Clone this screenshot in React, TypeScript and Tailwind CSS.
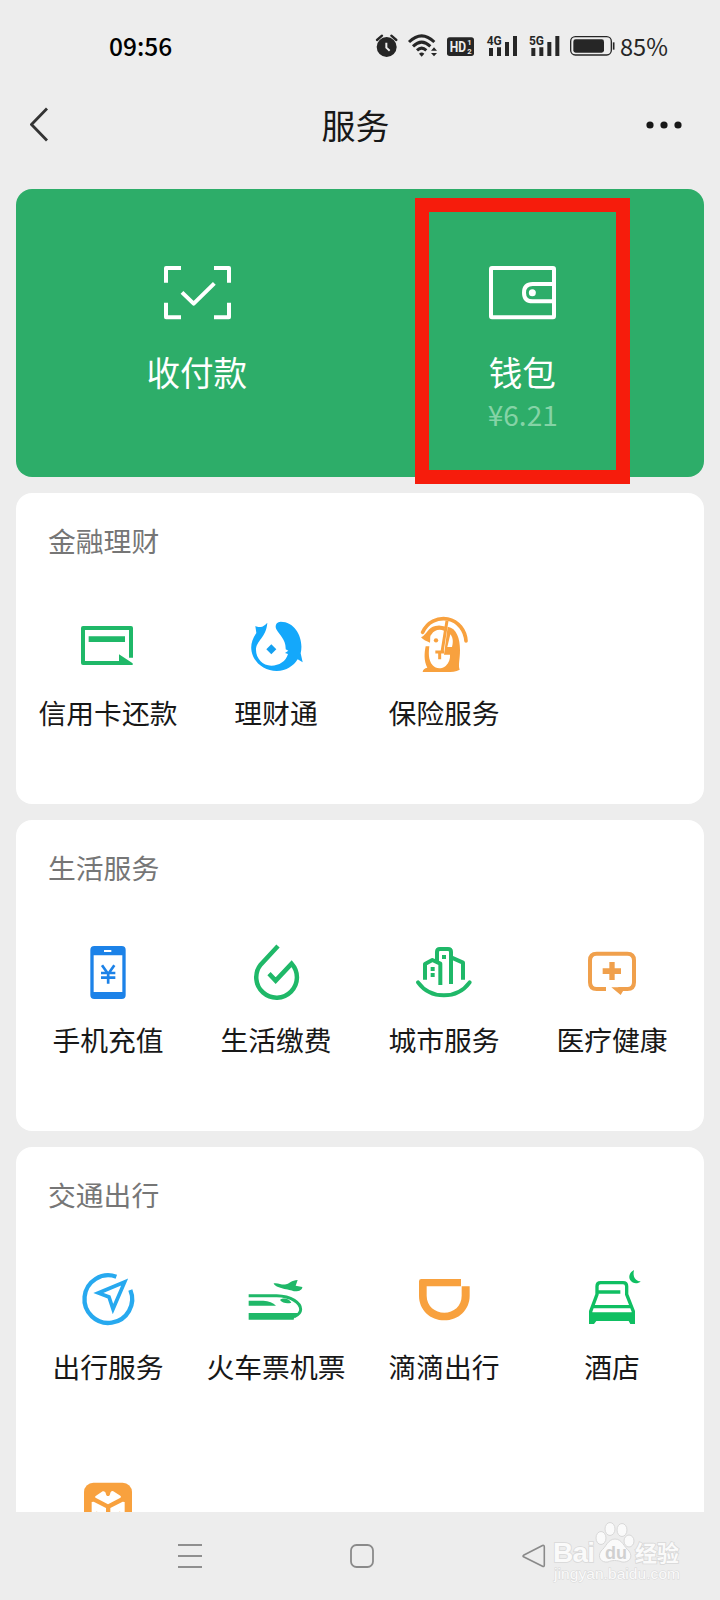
import type { ReactNode } from "react";

type Service = { label: string; icon: ReactNode };
type Section = { title: string; items: Service[] };

const GREEN = "#1fb868";
const ORANGE = "#f8a13e";

function Glyph({ box, children }: { box: string; children: ReactNode }) {
  return (
    <svg viewBox={box} className="block size-[60px]" fill="none">
      {children}
    </svg>
  );
}

const sections: Section[] = [
  {
    title: "金融理财",
    items: [
      {
        label: "信用卡还款",
        icon: (
          <Glyph box="144 48 180 180">
            <path d="M303 173V84H159V189H280" stroke={GREEN} strokeWidth="12" strokeLinejoin="round" />
            <path d="M176 109H285V126H176ZM267 163L308 190V195H267Z" fill={GREEN} />
          </Glyph>
        ),
      },
      {
        label: "理财通",
        icon: (
          <Glyph box="648 48 180 180">
            <path
              d="M712 68C705 76 698 80 692 81C686 82 681 80 676 78L679 99C666 118 661 137 665 155C672 190 705 213 740 213C770 213 790 198 803 178L818 187L812 160C822 118 798 65 752 65C738 66 734 78 739 88C748 106 768 117 767 148L775 152L765 159L774 162C768 184 747 197 724 197C698 197 678 175 678 150C678 122 709 112 712 68Z"
              fill="#14a8fb"
            />
            <path d="M724 133L739 148L724 163L709 148Z" fill="#14a0f0" />
          </Glyph>
        ),
      },
      {
        label: "保险服务",
        icon: (
          <Glyph box="162 48 180 180">
            <path d="M188 97C202 66 232 52 263 57C296 64 316 92 318 123" stroke={ORANGE} strokeWidth="11" strokeLinecap="round" />
            <path
              d="M183 112C201 104 203 82 226 78C240 74 246 78 256 80L252 92C238 86 222 90 215 103C208 108 212 118 210 128C200 124 190 120 183 112Z"
              fill={ORANGE}
            />
            <path
              d="M197 139H208C206 156 204 180 218 196C228 208 246 207 257 198C267 188 271 176 270 164H252L263 80C290 84 300 116 300 150C300 180 294 194 299 209C288 215 274 216 260 216H188C188 208 194 205 202 203C191 182 193 158 197 139Z"
              fill={ORANGE}
            />
            <path d="M271 103L262 141H276C280 126 279 112 271 103Z" fill="white" />
            <path d="M261 62L246 156M226 156H252M239 158V178" stroke={ORANGE} strokeWidth="9" />
            <circle cx="228" cy="121" r="6.500" fill={ORANGE} />
          </Glyph>
        ),
      },
    ],
  },
  {
    title: "生活服务",
    items: [
      {
        label: "手机充值",
        icon: (
          <Glyph box="144 39 180 180">
            <rect x="181" y="48" width="106" height="159" rx="12" fill="#1c82e8" />
            <path d="M191 76H277V186H191ZM222 60H244V66H222Z" fill="white" />
            <path d="M216 106L234.500 132L253 106M234.500 132V161M213 129H256M213 143H256" stroke="#1c82e8" strokeWidth="8" />
          </Glyph>
        ),
      },
      {
        label: "生活缴费",
        icon: (
          <Glyph box="648 39 180 180">
            <path d="M744 48L692 104A61 61 0 1 0 785 101L737 152L717 131" stroke={GREEN} strokeWidth="13.500" />
          </Glyph>
        ),
      },
      {
        label: "城市服务",
        icon: (
          <Glyph box="132 39 180 180">
            <g stroke={GREEN} strokeWidth="12" strokeLinejoin="round">
              <path d="M165 149V102L187 90L211 101V165M201 92V66Q201 57 210 57H234Q243 57 243 66V162M245 83L279 98V149" />
              <path d="M144 157C182 209 261 209 299 157" strokeLinecap="round" />
            </g>
            <path d="M182 111H194V123H182ZM182 129H194V141H182ZM216 75H228V87H216Z" fill={GREEN} />
          </Glyph>
        ),
      },
      {
        label: "医疗健康",
        icon: (
          <Glyph box="636 39 180 180">
            <path
              d="M708 177H680Q660 177 660 157V91Q660 71 680 71H772Q792 71 792 91V157Q792 177 772 177H745"
              stroke="#f0a04c"
              strokeWidth="12"
            />
            <path d="M724 172H766L752 195ZM698 115H718V96H734V115H753V132H734V150H718V132H698Z" fill="#f0a04c" />
          </Glyph>
        ),
      },
    ],
  },
  {
    title: "交通出行",
    items: [
      {
        label: "出行服务",
        icon: (
          <Glyph box="146 61 180 180">
            <path d="M261 81A71.500 71.500 0 1 0 303 121" stroke="#27a9ef" strokeWidth="13" />
            <path d="M286 97L207 130L239 142L251 178Z" stroke="#27a9ef" strokeWidth="11" />
          </Glyph>
        ),
      },
      {
        label: "火车票机票",
        icon: (
          <Glyph box="648 60 180 180">
            <path d="M731 100C745 97 755 106 768 103C778 101 784 91 803 90L797 107L817 111C817 119 808 125 792 124C780 118 735 116 731 100Z" fill={GREEN} />
            <path d="M656 137H740C785 138 812 160 812 178Q812 192 792 201" stroke={GREEN} strokeWidth="9" />
            <path d="M656 152H700C716 153 730 158 738 167H656ZM656 189H806C800 198 792 200 791 209H656ZM750 150C760 142 777 146 784 158C772 162 758 160 750 150Z" fill={GREEN} />
          </Glyph>
        ),
      },
      {
        label: "滴滴出行",
        icon: (
          <Glyph box="132 60 180 180">
            <path
              d="M154 87H273V109H170V137C170 168 195 188 223 188C251 188 275 168 275 137V109H299V137C299 180 265 211 223 211C181 211 147 180 147 137V94Q147 87 154 87Z"
              fill={ORANGE}
            />
          </Glyph>
        ),
      },
      {
        label: "酒店",
        icon: (
          <Glyph box="636 60 180 180">
            <path d="M792 60C779 67 774 80 781 91C788 102 804 103 812 94C797 94 787 81 792 60Z" fill="#0fbf62" />
            <g stroke="#0fbf62" strokeWidth="10">
              <path d="M662 210V184L681 133V109Q681 98 692 98H759Q770 98 770 109V133L790 184V210M680 126H751M668 170H783" />
            </g>
            <path d="M657 187H795V222H781L776 213H679L672 222H657Z" fill="#0fbf62" />
          </Glyph>
        ),
      },
      {
        label: "",
        icon: (
          <Glyph box="234 46 180 180">
            <rect x="252" y="66" width="144" height="146" rx="28" fill={ORANGE} />
            <path
              d="M287 106L308 92Q314 90 317 96Q318 106 324 106Q330 106 331 96Q334 89 340 92L361 105Q365 109 360 112L324 131L288 112Q283 109 287 106ZM275 124L281 123L318 142V180L275 160ZM374 124L368 123L331 142V180L374 160Z"
              fill="white"
            />
            <path d="M281 158Q290 149 299 158ZM350 158Q359 149 368 158Z" fill={ORANGE} />
          </Glyph>
        ),
      },
    ],
  },
];

function Signal({ box, x, label }: { box: string; x: number; label: string }) {
  return (
    <svg viewBox={box} className="h-7 w-[43px]" fill="#262626">
      <text x={x} y="75" fontSize="39" fontWeight="700" textLength="45" lengthAdjust="spacingAndGlyphs" className="font-['Roboto',sans-serif]">
        {label}
      </text>
      <path d={`M${x + 7} 84h12v24h-12zM${x + 31} 82h12v26h-12zM${x + 55} 66h12v42h-12zM${x + 79} 48h12v60h-12z`} />
    </svg>
  );
}

function StatusBar() {
  return (
    <div className="flex h-[76px] shrink-0 items-start pt-8 leading-7">
      <span className="ml-[109px] w-[266px] text-[24.5px] font-medium text-black">09:56</span>
      <svg viewBox="45 36 84 84" className="h-7 w-7" fill="#262626">
        <circle cx="80" cy="81" r="30" />
        <path d="M51 60L66 47M109 60L94 47" stroke="#262626" strokeWidth="7" strokeLinecap="round" />
        <path d="M79 68V83L89 92" stroke="#ededed" strokeWidth="6" fill="none" />
      </svg>
      <svg viewBox="129 36 120 84" className="h-7 w-10" fill="none">
        <path d="M147 66Q185 29 223 66M159 79Q185 54 211 79M171 91Q185 78 199 91" stroke="#262626" strokeWidth="9" />
        <path d="M185 110L177 101Q185 94 193 101ZM213 92L222 82L231 92ZM213 99L222 109L231 99Z" fill="#262626" />
      </svg>
      <svg viewBox="249 36 111 84" className="h-7 w-[37px]">
        <rect x="261" y="52" width="81" height="56" rx="8" fill="#262626" />
        <g fill="#ededed" fontWeight="700" className="font-['Roboto',sans-serif]">
          <text x="269" y="96" fontSize="43" textLength="49" lengthAdjust="spacingAndGlyphs">HD</text>
          <text x="322" y="75" fontSize="23">1</text>
          <text x="322" y="103" fontSize="23">2</text>
        </g>
      </svg>
      <Signal box="360 36 129 84" x={380} label="4G" />
      <Signal box="488 36 129 84" x={506} label="5G" />
      <svg viewBox="615 36 159 84" className="-ml-px h-7 w-[53px]" fill="none">
        <rect x="632" y="50" width="122" height="55" rx="14" stroke="#262626" strokeWidth="4" />
        <rect x="640" y="58" width="92" height="40" rx="7" fill="#262626" />
        <path d="M761 67V89" stroke="#262626" strokeWidth="5" />
      </svg>
      <span className="ml-0.5 text-[23.6px] text-[#262626]">85%</span>
    </div>
  );
}

function Header() {
  return (
    <header className="grid h-[113px] shrink-0 grid-cols-3 items-start px-[30px]">
      <svg viewBox="0 0 40 36" className="mt-[30px] h-9 w-10" fill="none">
        <path d="M17 2.500L1.500 18.500L17 34.500" stroke="#333" strokeWidth="2.800" />
      </svg>
      <h1 className="mt-6 -ml-[9px] text-center text-[34px] leading-[50px] text-[#181818]">服务</h1>
      <svg viewBox="0 0 40 8" className="mr-2 mt-[45px] h-2 w-10 justify-self-end" fill="#181818">
        <circle cx="8" cy="4" r="3.600" />
        <circle cx="22" cy="4" r="3.600" />
        <circle cx="36" cy="4" r="3.600" />
      </svg>
    </header>
  );
}

function PayCard() {
  return (
    <div className="relative h-72 shrink-0 rounded-2xl bg-[#2dad69] px-[18.5px] text-white">
      <div className="grid grid-cols-2 pt-[77px]">
        <div className="flex flex-col items-center">
          <svg viewBox="492 258 201 162" className="h-[54px] w-[67px]" fill="none" stroke="white" strokeWidth="12">
            <path d="M543 264H498V308M642 264H687V308M543 412H498V368M642 412H687V368M546 337L581 371L643 310" strokeLinejoin="round" />
          </svg>
          <span className="-ml-px mt-7 text-[33.6px] leading-[48px]">收付款</span>
        </div>
        <div className="flex flex-col items-center">
          <svg viewBox="387 558 201 162" className="h-[54px] w-[67px]" fill="none" stroke="white" strokeWidth="12">
            <rect x="393" y="564" width="189" height="148" rx="3" />
            <path d="M582 612H518Q492 612 492 638Q492 664 518 664H582" />
            <circle cx="517" cy="638" r="10.500" fill="white" stroke="none" />
          </svg>
          <span className="-ml-px mt-7 text-[33.6px] leading-[48px]">钱包</span>
          <span className="text-[28px] leading-9 text-[#85d3a6]">¥6.21</span>
        </div>
      </div>
      <div className="absolute left-[399px] top-[9px] h-[286px] w-[215px] border-[14px] border-[#f61c0c]" />
    </div>
  );
}

function ServiceCard({ title, items }: Section) {
  return (
    <section className="min-h-[311px] shrink-0 rounded-2xl bg-white px-2">
      <h2 className="px-6 pt-[27px] text-[27.8px] leading-10 text-[#767676]">{title}</h2>
      <div className="mt-14 grid grid-cols-4 gap-y-[90px]">
        {items.map((item, i) => (
          <div key={i} className="flex flex-col items-center">
            {item.icon}
            <span className="mt-4 h-10 whitespace-nowrap text-[27.8px] leading-10 text-[#181818]">{item.label}</span>
          </div>
        ))}
      </div>
    </section>
  );
}

function Watermark() {
  return (
    <svg viewBox="0 0 140 70" className="absolute bottom-2.5 right-9 h-[70px] w-[140px]" fill="#fafafa" stroke="#d8d8d8" strokeWidth="1.600">
      <g strokeWidth="1">
        <ellipse cx="57" cy="18" rx="5" ry="6.500" />
        <ellipse cx="66" cy="9" rx="5" ry="6.500" />
        <ellipse cx="78" cy="10" rx="5" ry="6.500" />
        <ellipse cx="85" cy="21" rx="5" ry="6" />
        <path d="M71 19C78 19 80 27 85 31C90 38 84 43 78 42C73 40 68 40 64 42C57 43 53 37 57 31C62 27 64 19 71 19Z" />
      </g>
      <g paintOrder="stroke" className="font-['Liberation_Sans',sans-serif]">
        <text x="9" y="42" fontSize="28" fontWeight="700" textLength="42">Bai</text>
        <text x="61" y="39" fontSize="18" fontWeight="700" fill="#d0d0d0" stroke="none">du</text>
        <text x="91" y="41" fontSize="22" fontWeight="700" className="font-['Noto_Sans_CJK_SC',sans-serif]">经验</text>
        <text x="10" y="59" fontSize="15.500" textLength="126" strokeWidth="1">jingyan.baidu.com</text>
      </g>
    </svg>
  );
}

function NavBar() {
  return (
    <nav className="relative flex h-[88px] shrink-0 items-start bg-[#ededed] pt-8">
      <svg viewBox="0 0 24 24" className="ml-[178px] size-6" stroke="#8f8f8f" strokeWidth="2">
        <path d="M0 1H24M0 12H24M0 23H24" />
      </svg>
      <svg viewBox="0 0 24 24" className="ml-[148px] size-6" fill="none" stroke="#8a8a8a" strokeWidth="1.800">
        <rect x="1" y="1" width="22" height="22" rx="5.500" />
      </svg>
      <svg viewBox="0 0 24 24" className="ml-[148px] size-6" fill="none" stroke="#8a8a8a" strokeWidth="1.600" strokeLinejoin="round">
        <path d="M20.500 1.500Q22.300 0.800 22.300 3V21Q22.300 23.200 20.500 22.300L1.500 12.800Q0.500 12 1.500 11.300Z" />
      </svg>
      <Watermark />
    </nav>
  );
}

export default function App() {
  return (
    <div className="flex h-[1600px] w-[720px] flex-col overflow-hidden bg-[#ededed] font-['Noto_Sans_CJK_SC',sans-serif]">
      <StatusBar />
      <Header />
      <main className="flex min-h-0 flex-1 flex-col gap-4 overflow-hidden px-4">
        <PayCard />
        {sections.map((s) => (
          <ServiceCard key={s.title} {...s} />
        ))}
      </main>
      <NavBar />
    </div>
  );
}
